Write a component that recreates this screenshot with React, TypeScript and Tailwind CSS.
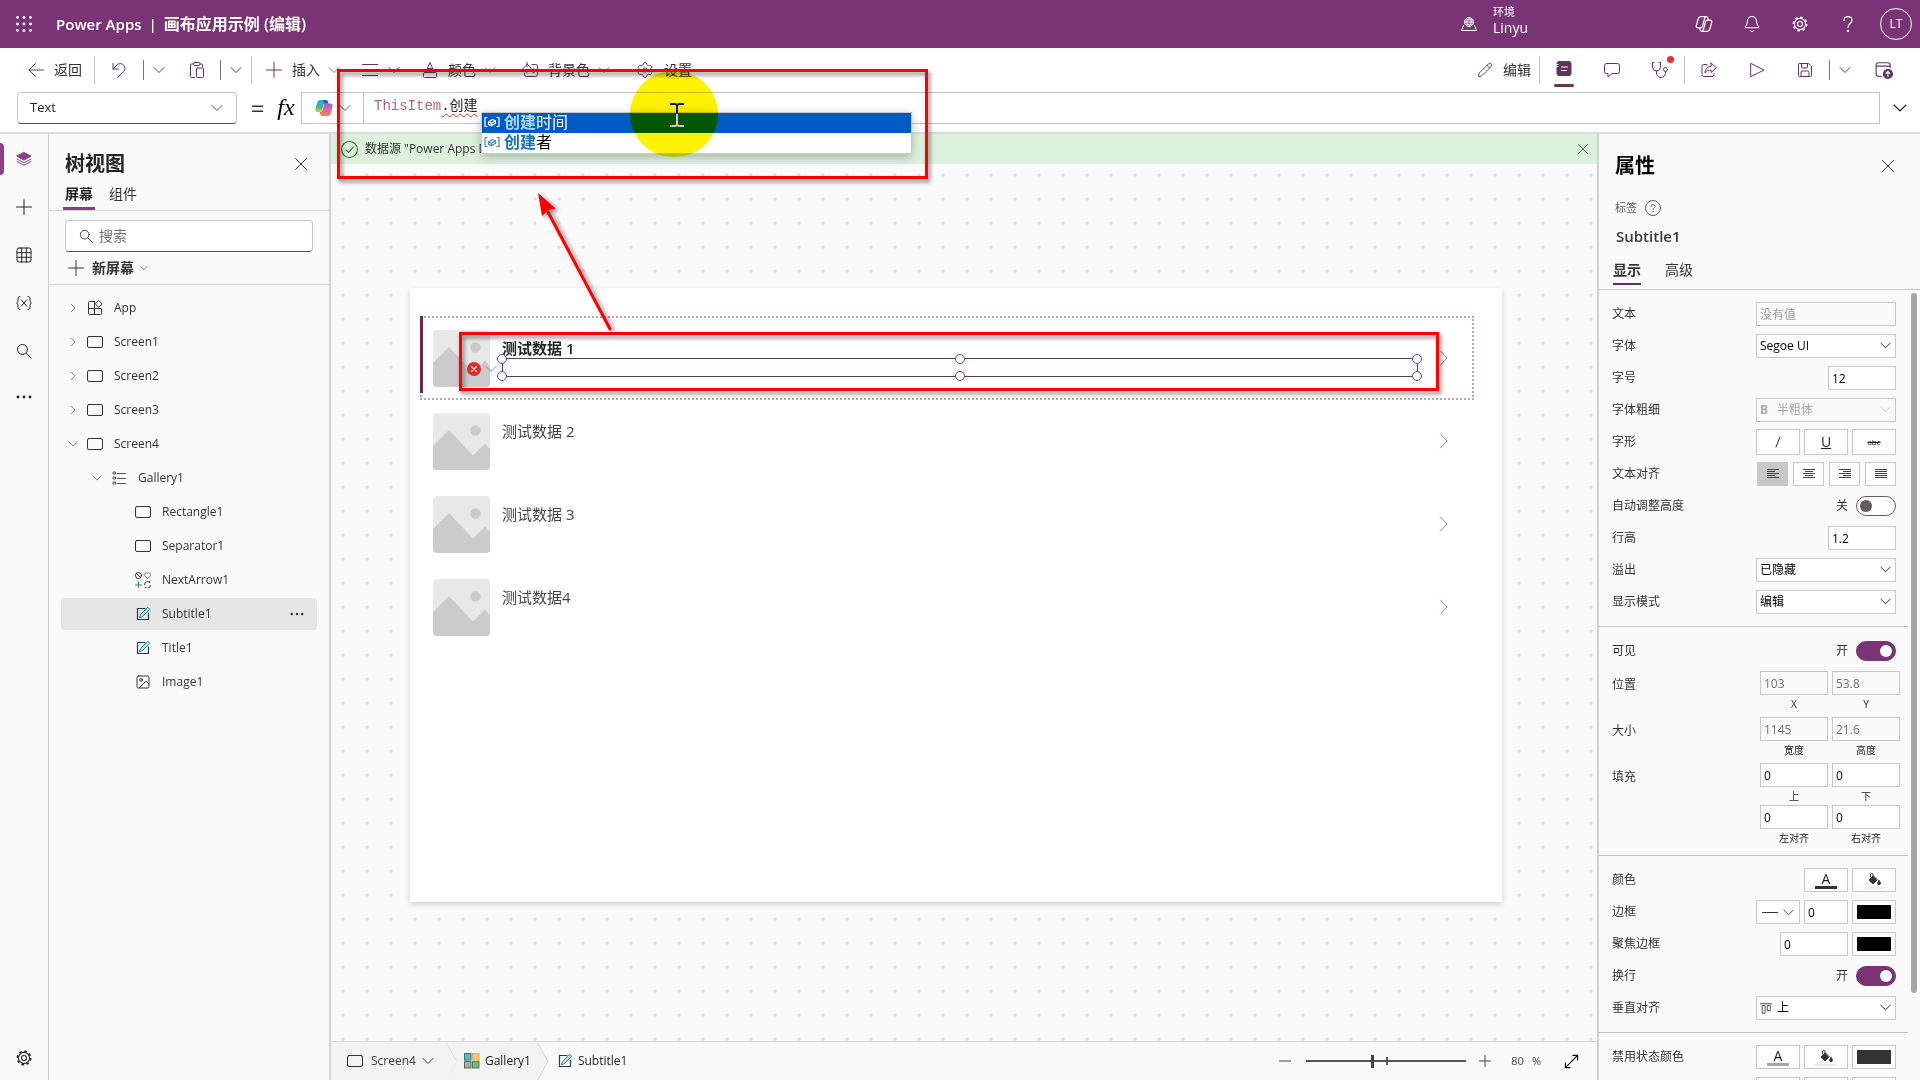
import type { ReactNode } from 'react';
import { Bell, Image as ImageIcon, Pencil, Settings } from 'lucide-react';

/* ── Icons ── */

type IconProps = { className?: string; children?: ReactNode; box?: number; stroke?: number };

function Svg({ className = 'w-4 h-4', children, box = 16, stroke = 1 }: IconProps) {
  return (
    <svg
      viewBox={`0 0 ${box} ${box}`}
      className={`${className} flex-shrink-0`}
      fill="none"
      stroke="currentColor"
      strokeWidth={stroke}
      strokeLinecap="round"
      strokeLinejoin="round"
      aria-hidden="true"
    >
      {children}
    </svg>
  );
}

const ChevronDown = ({ className = 'w-3 h-3' }: IconProps) => (
  <Svg className={className} box={12}><path d="M1 3.5l5 5 5-5" /></Svg>
);
const ChevronRight = ({ className = 'w-3 h-3' }: IconProps) => (
  <Svg className={className} box={12}><path d="M4 1.5L8.5 6 4 10.5" /></Svg>
);
const Plus = ({ className }: IconProps) => <Svg className={className}><path d="M8 .5v15M.5 8h15" /></Svg>;
const Close = ({ className = 'w-3 h-3' }: IconProps) => (
  <Svg className={className} box={12}><path d="M.5.5l11 11M11.5.5l-11 11" /></Svg>
);
const SearchIcon = ({ className }: IconProps) => (
  <Svg className={className}><circle cx="6.5" cy="6.5" r="5" /><path d="M10.3 10.3l5 5" /></Svg>
);
const Ellipsis = ({ className }: IconProps) => (
  <Svg className={className}>
    <g fill="currentColor" stroke="none">
      <circle cx="2" cy="8" r="1.4" /><circle cx="8" cy="8" r="1.4" /><circle cx="14" cy="8" r="1.4" />
    </g>
  </Svg>
);
const ScreenIcon = () => <Svg><rect x=".5" y="2.5" width="15" height="11" rx="1.5" stroke="#333" /></Svg>;
const AppIcon = () => (
  <Svg>
    <path d="M7.500 1.500H2.500a1 1 0 00-1 1v11a1 1 0 001 1h11a1 1 0 001-1V8.500h-13M7.500 1.500v13" />
    <path d="M11.800.600l3.400 3.400-3.400 3.400-3.400-3.400z" />
  </Svg>
);
const GalleryIcon = () => (
  <Svg>
    <g stroke="#555">
      <path d="M6 3.500h8.500M6 8.500h8.500M6 13.500h8.500" />
      <path d="M2.500 2h2v2h-2zM2.500 7h2v2h-2zM2.500 12h2v2h-2z" />
    </g>
  </Svg>
);
const LabelIcon = () => (
  <Svg>
    <path d="M10 2.500H2.500v11h11V7" stroke="#2b3a4a" strokeWidth="1.200" strokeLinejoin="miter" />
    <path d="M4.500 11.500l1-3 7.300-7.200 2 2-7.300 7.200z" stroke="#2a8a92" fill="#b9e3e4" />
  </Svg>
);
const IconsIcon = () => (
  <Svg>
    <circle cx="3.5" cy="3.5" r="3" stroke="#333" /><path d="M1.500 1.500l4 4" stroke="#333" />
    <path d="M3.500 10v6M.5 13h6" stroke="#2d8a4a" />
    <path d="M12.500 6.500L9.500 3.600a1.700 1.700 0 013-2 1.700 1.700 0 013 2z" stroke="#d2603c" />
    <path d="M9.500 12.500a3 3 0 015.200-1.800V9.500M15.500 13.500a3 3 0 01-5.200 1.800v1" stroke="#333" />
  </Svg>
);
const CopilotLogo = () => (
  <svg viewBox="0 0 20 20" className="w-[18px] h-[18px]" aria-hidden="true">
    <defs>
      <linearGradient id="cpA" x1="0" y1="0" x2="0" y2="1"><stop offset="0" stopColor="#23a9e8" /><stop offset=".6" stopColor="#3fb98a" /><stop offset="1" stopColor="#f0c735" /></linearGradient>
      <linearGradient id="cpB" x1="0" y1="0" x2="0" y2="1"><stop offset="0" stopColor="#a15de0" /><stop offset=".5" stopColor="#e8639b" /><stop offset="1" stopColor="#f58a4a" /></linearGradient>
    </defs>
    <path d="M6 1h6c1.500 0 2 1 2.400 2.500L15 5h-3c-2 0-2.500 1-3 3l-1 4c-.5 2-1 2.500-2.500 2.500H3C.8 14.500 0 13 .5 11L2.500 4C3.100 2 4 1 6 1z" fill="url(#cpA)" />
    <path d="M9 1h3c1.500 0 2 1 2.400 2.500L15 5h-3C10 5 9.500 4 9.300 3z" fill="#1f5fc4" />
    <path d="M14 19H8c-1.500 0-2-1-2.400-2.500L5 14.500c2 .3 3-.6 3.500-2.500l1-4c.5-2 1-3 3-3H17c2.200 0 3 1.500 2.500 3.500l-2 7.500c-.6 2-1.500 3-3.500 3z" fill="url(#cpB)" />
  </svg>
);
const FieldIcon = () => (
  <Svg className="w-4 h-[18px]" stroke={1.200}>
    <path d="M3 3.500H1v9h2M13 3.500h2v9h-2" />
    <path d="M4.500 8l4-2.500 3 1.300v2.400l-4 2.500-3-1.300zM4.500 8l3 1.300 4-2.500M7.500 9.300v2.400" />
  </Svg>
);
const BucketIcon = () => (
  <Svg className="w-4 h-4">
    <path d="M7 5L3 9l4 4 4-4z" fill="currentColor" /><path d="M7 7V3a1.500 1.500 0 00-2.500 0v3" />
    <path d="M13 9.500c1 1.500 1.500 2 1.500 2.800a1.400 1.400 0 01-2.900 0c0-.8.600-1.300 1.400-2.800z" fill="currentColor" />
  </Svg>
);
const GearIcon = () => (
  <Svg stroke={1.100}>
    <circle cx="8" cy="8" r="2.500" />
    <circle cx="8" cy="8" r="5.600" />
    <circle cx="8" cy="8" r="6.700" strokeWidth="1.600" strokeDasharray="2.630 2.630" strokeLinecap="butt" />
  </Svg>
);

/* ── Header ── */

function Header() {
  return (
    <header className="h-12 flex-shrink-0 bg-[#7a3374] text-white flex items-center">
      <button aria-label="应用启动器" className="w-12 h-12 flex items-center justify-center">
        <Svg>
          <g fill="currentColor" stroke="none">
            {[1.5, 8, 14.5].map((y) => [1.5, 8, 14.5].map((x) => <circle key={`${x}-${y}`} cx={x} cy={y} r="1.4" />))}
          </g>
        </Svg>
      </button>
      <h1 className="flex items-center pl-2 text-[15px] leading-6 font-semibold whitespace-nowrap">
        <span>Power Apps</span>
        <span className="px-[7px]">|</span>
        <span className="text-base">画布应用示例 (编辑)</span>
      </h1>

      <div className="ml-auto flex items-center gap-4 pr-[152px]">
        <Svg className="w-4 h-4">
          <circle cx="8" cy="6" r="4.500" /><path d="M3.500 6h9M8 1.500c-3 3-3 6 0 9M8 1.500c3 3 3 6 0 9M4.200 3.800h7.600M4.200 8.300h7.600" />
          <path d="M2.500 9.500L.500 14.500h15l-2-5" />
        </Svg>
        <div className="flex flex-col pb-2">
          <span className="text-[11px] leading-4">环境</span>
          <span className="text-sm leading-4">Linyu</span>
        </div>
      </div>
      <div className="flex items-center">
        <button aria-label="Copilot" className="w-12 h-12 flex items-center justify-center">
          <Svg className="w-[18px] h-[18px]" stroke={1.1}>
            <path d="M5 1.500h5c1 0 1.300.6 1.600 1.700l.4 1.300M5 1.500C3.700 1.500 3.200 2.300 2.800 3.600L1.200 9c-.4 1.500 0 2.500 1.500 2.500H5c1 0 1.400-.5 1.700-1.500L8.500 3c.3-1 .6-1.500 1.500-1.500" />
            <path d="M11 14.500H6c-1 0-1.300-.6-1.600-1.700L4 11.500M11 14.500c1.300 0 1.800-.8 2.200-2.100L14.800 7c.4-1.500 0-2.500-1.500-2.500H11c-1 0-1.400.5-1.700 1.500L7.500 13c-.3 1-.6 1.500-1.500 1.500" />
          </Svg>
        </button>
        <button aria-label="通知" className="w-12 h-12 flex items-center justify-center"><Bell className="w-[18px] h-[18px]" strokeWidth={1.4} /></button>
        <button aria-label="设置" className="w-12 h-12 flex items-center justify-center"><GearIcon /></button>
        <button aria-label="帮助" className="w-12 h-12 flex items-center justify-center">
          <Svg className="w-4 h-4" stroke={1.200}><path d="M4 4.500C4 2 5.500.600 8 .600s4 1.500 4 3.700c0 3-4 3.500-4 7" /><circle cx="8" cy="15" r=".6" fill="currentColor" /></Svg>
        </button>
        <div className="w-12 h-12 flex items-center justify-center">
          <span className="w-8 h-8 rounded-full border border-white text-xs leading-4 flex items-center justify-center">LT</span>
        </div>
      </div>
    </header>
  );
}

/* ── Command bar ── */

const Rule = ({ short = false }: { short?: boolean }) => (
  <span className={short ? 'w-px h-5 bg-[#777]' : 'w-px h-7 bg-[#c4c4c4]'} />
);

function Tool({ label, className, children }: { label: string; className: string; children: ReactNode }) {
  return (
    <button aria-label={label} className={`h-full flex items-center justify-center text-[#65325f] ${className}`}>
      {children}
    </button>
  );
}

function CommandBar() {
  return (
    <div className="h-11 flex-shrink-0 bg-white flex items-center text-sm leading-5 whitespace-nowrap">
      <button className="flex items-center gap-[10px] pl-7 pr-3">
        <Svg className="w-4 h-4 text-[#65325f]"><path d="M15.500 8H1M7.500 1.500L1 8l6.500 6.500" /></Svg>
        返回
      </button>
      <Rule />
      <Tool label="撤消" className="w-12"><Svg><path d="M2 1.500v5.500h5.500M2 7l4-4a4.600 4.600 0 016.600 6.500L6.500 15.500" /></Svg></Tool>
      <Rule short />
      <Tool label="撤消选项" className="w-[30px]"><ChevronDown /></Tool>
      <Tool label="粘贴" className="w-[46px]">
        <Svg><path d="M4.500 2H2.500a1 1 0 00-1 1v11.500a1 1 0 001 1h3M11 2h1.500a1 1 0 011 1v2" /><rect x="4.500" y=".5" width="6.500" height="3" rx="1.200" /><rect x="7.500" y="6" width="7" height="9.500" rx="1" /></Svg>
      </Tool>
      <Rule short />
      <Tool label="粘贴选项" className="w-[30px]"><ChevronDown /></Tool>
      <Rule />
      <button className="flex items-center pl-[14px]">
        <Plus className="w-4 h-4 mr-[10px] text-[#65325f]" />插入<ChevronDown className="w-3 h-3 ml-2 text-[#777]" />
      </button>
      <button aria-label="更多布局" className="flex items-center pl-[22px] text-[#65325f]">
        <Svg><path d="M0 2.500h16M0 8h16M0 13.500h16" /></Svg><ChevronDown className="w-3 h-3 ml-[10px]" />
      </button>
      <button className="flex items-center pl-[22px]">
        <Svg className="w-4 h-4 mr-[10px] text-[#65325f]"><path d="M4 9.500L8 .500l4 9M5.500 6.500h5" /><rect x="1.500" y="10.500" width="13" height="5" rx="1" /></Svg>
        颜色<ChevronDown className="w-3 h-3 ml-2 text-[#777]" />
      </button>
      <button className="flex items-center pl-[26px]">
        <Svg className="w-4 h-4 mr-[10px] text-[#65325f]"><path d="M10 2.500h3.500a2 2 0 012 2v8a2 2 0 01-2 2h-9a2 2 0 01-2-2V11" /><path d="M5 2.500L1 6.500l4 4 4-4zM5 .500v4" /><path d="M11.500 7c1 1.300 1.300 1.800 1.300 2.300a1.300 1.300 0 01-2.600 0c0-.5.300-1 1.300-2.300z" /></Svg>
        背景色<ChevronDown className="w-3 h-3 ml-2 text-[#777]" />
      </button>
      <button className="flex items-center pl-[26px]">
        <Settings className="w-[18px] h-[18px] mr-[10px] text-[#65325f]" strokeWidth={1.3} />设置
      </button>

      <div className="ml-auto h-full flex items-center pr-3">
        <button className="flex items-center gap-[10px] pr-2">
          <Pencil className="w-4 h-4 text-[#65325f]" strokeWidth={1.4} />编辑
        </button>
        <Rule />
        <Tool label="属性" className="w-12 flex-col gap-[7px] pt-2">
          <Svg className="w-4 h-4"><rect x="1" y=".5" width="14" height="14" rx="2" fill="currentColor" /><path d="M5.500 6h6M5.500 9.500h5" stroke="#fff" /><path d="M0 3.500h2M0 5.500h2" stroke="#fff" /></Svg>
          <span className="w-5 h-[3px] rounded-full bg-[#65325f]" />
        </Tool>
        <Tool label="批注" className="w-12"><Svg><path d="M2.500 1.500h11a2 2 0 012 2v6a2 2 0 01-2 2H8l-4 3.500v-3.500H2.500a2 2 0 01-2-2v-6a2 2 0 012-2z" /></Svg></Tool>
        <div className="relative h-full">
          <Tool label="应用检查器" className="w-12">
            <Svg><path d="M2 .500H.500v4.500a4 4 0 008 0V.500H7M4.500 9v2a4.500 4.500 0 009 0V9.500" /><circle cx="13.500" cy="7.500" r="2" /></Svg>
          </Tool>
          <span className="absolute right-[10px] top-2 w-[7px] h-[7px] rounded-full bg-[#e0302a]" />
        </div>
        <Rule />
        <Tool label="共享" className="w-12"><Svg><path d="M6 2.500H3a2 2 0 00-2 2v8a2 2 0 002 2h8a2 2 0 002-2v-1" /><path d="M10 1l5.500 4.800L10 10.500V8C7.500 8 5.500 8.800 4 11c.3-4 2.500-6.600 6-7z" /></Svg></Tool>
        <Tool label="预览" className="w-12"><Svg><path d="M2 1.500L15 8 2 14.500z" /></Svg></Tool>
        <Tool label="保存" className="w-12"><Svg><path d="M2.500 1.500h9L14.500 4v9.500a1 1 0 01-1 1h-11a1 1 0 01-1-1v-11a1 1 0 011-1zM4.500 1.500V5a1 1 0 001 1h4a1 1 0 001-1V1.500M4 14.500V10a1 1 0 011-1h6a1 1 0 011 1v4.500" /></Svg></Tool>
        <Rule short />
        <Tool label="保存选项" className="w-[30px]"><ChevronDown /></Tool>
        <Tool label="发布" className="w-12">
          <Svg className="w-[18px] h-[18px]"><path d="M6 13.500H3a2 2 0 01-2-2v-8a2 2 0 012-2h8.500a2 2 0 012 2V6M1 4.500h12.500" /><circle cx="11.500" cy="11.500" r="4" fill="currentColor" /><path d="M11.500 13.500v-4M9.800 11l1.700-1.700 1.700 1.700" stroke="#fff" /></Svg>
        </Tool>
      </div>
    </div>
  );
}

/* ── Formula bar ── */

function FormulaBar() {
  return (
    <div className="h-[42px] flex-shrink-0 bg-white flex items-start pl-[17px] border-b-2 border-[#dcdcdc]">
      <div className="relative">
        <select aria-label="属性" className="appearance-none w-[220px] h-8 pl-3 rounded border border-[#c4c4c4] border-b-[#555] bg-white text-[13px] text-[#242424]">
          <option>Text</option>
        </select>
        <ChevronDown className="w-3 h-3 absolute right-[14px] top-[10px] pointer-events-none text-[#555]" />
      </div>
      <span className="h-8 w-[27px] ml-[7px] text-2xl leading-8 text-center text-[#333]">=</span>
      <span className="h-8 w-[30px] font-['Liberation_Serif',serif] italic text-2xl leading-[30px] text-center text-black">fx</span>

      <div className="relative flex-1 h-8 border border-[#c4c4c4] flex">
        <button aria-label="Copilot" className="w-[62px] flex-shrink-0 border-r border-[#c4c4c4] flex items-center pl-[13px] gap-[6px] text-[#666]">
          <CopilotLogo /><ChevronDown />
        </button>
        <code className="flex h-6 pl-[10px] pt-[3px] font-['Liberation_Mono','Noto_Sans_CJK_SC',monospace] text-sm leading-5 text-[#222]">
          <span className="text-[#b0627f]">ThisItem</span>
          <span className="underline decoration-wavy decoration-[#c8322b] decoration-1 underline-offset-[3px]">.创建</span>
        </code>

        {/* autocomplete list */}
        <ul
          role="listbox"
          aria-label="建议"
          className="absolute left-[179px] top-[19px] z-20 w-[431px] h-[42px] bg-white border border-[#c8c8c8] shadow-[0_3px_10px_rgba(0,0,0,0.25)] text-base leading-4 font-['Noto_Sans_CJK_SC',sans-serif]"
        >
          <li role="option" aria-selected="true" className="flex h-5 items-start pl-[2px] gap-1 bg-[#005bc4] text-white">
            <FieldIcon /><span><b className="text-[#a9dcff]">创建</b>时间</span>
          </li>
          <li role="option" aria-selected="false" className="flex h-5 items-start pl-[2px] gap-1 text-black">
            <span className="text-[#3e86c0]"><FieldIcon /></span><span><b className="text-[#1a6fb8]">创建</b>者</span>
          </li>
        </ul>
      </div>

      <button aria-label="展开编辑栏" className="w-10 h-8 flex items-center justify-center text-black"><ChevronDown className="w-[14px] h-[14px]" /></button>
    </div>
  );
}

/* ── Left rail and tree ── */

function Rail() {
  return (
    <nav className="w-[49px] flex-shrink-0 border-r border-[#d0d0d0] flex flex-col items-center pt-px text-[#242424]">
      <button aria-label="树视图" className="relative w-12 h-12 flex items-center justify-center text-[#8e3f8a]">
        <span className="absolute left-0 top-2 w-1 h-8 rounded-r bg-[#8e4189]" />
        <Svg>
          <path d="M8 1.500l7 3.800-7 3.800-7-3.800z" fill="currentColor" /><path d="M1 8l7 3.800L15 8M1 10.500l7 3.800 7-3.800" />
        </Svg>
      </button>
      <button aria-label="插入" className="w-12 h-12 flex items-center justify-center"><Plus /></button>
      <button aria-label="数据" className="w-12 h-12 flex items-center justify-center">
        <Svg><rect x="1" y="1" width="14" height="14" rx="2" /><path d="M1 5.700h14M1 10.300h14M5.700 1v14M10.300 1v14" /></Svg>
      </button>
      <button aria-label="变量" className="w-12 h-12 flex items-center justify-center">
        <Svg><path d="M4 1.500c-1.500 0-2 .5-2 2v2.800L.700 8 2 9.700v2.800c0 1.500.500 2 2 2M12 1.500c1.500 0 2 .5 2 2v2.800L15.300 8 14 9.700v2.800c0 1.500-.5 2-2 2M5.500 5l5 6M10.500 5l-5 6" /></Svg>
      </button>
      <button aria-label="搜索" className="w-12 h-12 flex items-center justify-center"><SearchIcon /></button>
      <button aria-label="更多" className="w-12 h-11 flex items-center justify-center"><Ellipsis /></button>
      <button aria-label="设置" className="mt-auto w-12 h-11 flex items-center justify-center"><GearIcon /></button>
    </nav>
  );
}

type Node = { name: string; level: 0 | 1 | 2; icon: ReactNode; open?: boolean; selected?: boolean };

const TREE: Node[] = [
  { name: 'App', level: 0, icon: <AppIcon />, open: false },
  { name: 'Screen1', level: 0, icon: <ScreenIcon />, open: false },
  { name: 'Screen2', level: 0, icon: <ScreenIcon />, open: false },
  { name: 'Screen3', level: 0, icon: <ScreenIcon />, open: false },
  { name: 'Screen4', level: 0, icon: <ScreenIcon />, open: true },
  { name: 'Gallery1', level: 1, icon: <GalleryIcon />, open: true },
  { name: 'Rectangle1', level: 2, icon: <ScreenIcon /> },
  { name: 'Separator1', level: 2, icon: <ScreenIcon /> },
  { name: 'NextArrow1', level: 2, icon: <IconsIcon /> },
  { name: 'Subtitle1', level: 2, icon: <LabelIcon />, selected: true },
  { name: 'Title1', level: 2, icon: <LabelIcon /> },
  { name: 'Image1', level: 2, icon: <ImageIcon className="w-4 h-4" strokeWidth={1.5} /> },
];

const INDENT = ['pl-[7px]', 'pl-[31px]', 'pl-[55px]'];

function TreePanel() {
  return (
    <aside className="w-[282px] flex-shrink-0 border-r-2 border-[#d4d4d4] text-[#333]">
      <div className="flex items-center pl-4 pr-[22px] pt-[14px]">
        <h2 className="text-xl leading-8 font-bold text-[#242424]">树视图</h2>
        <button aria-label="关闭" className="ml-auto"><Close /></button>
      </div>
      <div className="flex gap-3 pl-[14px] border-b border-[#d8d8d8] text-sm leading-5">
        <button className="px-[2px] pt-1 pb-[3px] font-bold text-[#242424] border-b-[3px] border-[#873b82]">屏幕</button>
        <button className="px-[2px] pt-1 pb-[3px] border-b-[3px] border-transparent">组件</button>
      </div>
      <div className="px-4 pt-[9px]">
        <label className="h-8 flex items-center gap-[6px] pl-[13px] rounded border border-[#c8c8d0] border-b-[#555] bg-white">
          <SearchIcon className="w-[14px] h-[14px]" />
          <input type="search" aria-label="搜索" placeholder="搜索" className="min-w-0 flex-1 bg-transparent text-sm leading-5 outline-none placeholder:text-[#707070]" />
        </label>
      </div>
      <button className="w-full h-[33px] flex items-center pl-[19px] border-b border-[#d8d8d8] text-sm leading-5 font-semibold">
        <Plus /><span className="ml-2">新屏幕</span><ChevronDown className="w-2 h-2 ml-[6px]" />
      </button>
      <ul role="tree" aria-label="控件" className="flex flex-col gap-[2px] pl-3 pr-3 pt-[7px] text-xs leading-4">
        {TREE.map((n) => (
          <li
            key={n.name}
            role="treeitem"
            aria-selected={!!n.selected}
            aria-expanded={n.open}
            className={`h-8 flex items-center rounded ${INDENT[n.level]} ${n.selected ? 'bg-[#e6e6e6]' : ''}`}
          >
            <span className="w-[19px] text-[#666]">
              {n.open === true && <ChevronDown className="w-[10px] h-[10px]" />}
              {n.open === false && <ChevronRight className="w-[10px] h-[10px]" />}
            </span>
            {n.icon}
            <span className="ml-[11px]">{n.name}</span>
            {n.selected && <button aria-label="更多选项" className="ml-auto mr-[13px]"><Ellipsis className="w-[14px] h-[14px]" /></button>}
          </li>
        ))}
      </ul>
    </aside>
  );
}

/* ── Canvas ── */

const Thumb = () => (
  <svg viewBox="0 0 57 57" className="w-[57px] h-[57px] rounded" aria-hidden="true">
    <rect width="57" height="57" fill="#e8e8e8" />
    <circle cx="42.500" cy="17.500" r="5.200" fill="#cbcbcb" />
    <path d="M0 33L16 17l24 25.500 12-12 5 6V57H0z" fill="#cbcbcb" />
  </svg>
);

const Handle = ({ className }: { className: string }) => (
  <span className={`absolute w-[10px] h-[10px] rounded-full border border-[#6b4566] bg-white ${className}`} />
);

function Selection() {
  return (
    <>
      {/* template outline */}
      <div className="absolute inset-x-0 top-0 h-[84px] border-2 border-dotted border-[#b9a5b6]" />
      <div className="absolute left-0 top-0 w-[3px] h-[77px] bg-[#6d2a3a]" />
      {/* selected control */}
      <div className="absolute left-[82px] right-[56px] top-[42px] h-[19px] border border-[#5b3b57]">
        <Handle className="-left-[6px] -top-[5px]" />
        <Handle className="-left-[6px] -bottom-[5px]" />
        <Handle className="left-1/2 -ml-[5px] -top-[5px]" />
        <Handle className="left-1/2 -ml-[5px] -bottom-[5px]" />
        <Handle className="-right-[5px] -top-[5px]" />
        <Handle className="-right-[5px] -bottom-[5px]" />
      </div>
      <button aria-label="错误" className="absolute left-[47px] top-[46px] flex items-center gap-1">
        <Svg className="w-[14px] h-[14px]"><circle cx="8" cy="8" r="8" fill="#dd2c2c" stroke="none" /><path d="M5.200 5.200l5.600 5.600M10.800 5.200l-5.600 5.600" stroke="#fff" strokeWidth="1.300" /></Svg>
        <ChevronDown className="w-3 h-3 text-[#888]" />
      </button>
      <div className="absolute left-[39px] right-[35px] top-[16px] h-[59px] border-[3px] border-[#f00] drop-shadow-[2px_3px_2px_rgba(0,0,0,0.5)]" />
    </>
  );
}

const ITEMS = ['测试数据 1', '测试数据 2', '测试数据 3', '测试数据4'];

function Canvas() {
  return (
    <div className="flex-1 min-h-0 overflow-hidden bg-[radial-gradient(circle_at_center,#dcdcdc_1px,transparent_2px)] bg-[length:24px_24px] bg-[position:0px_5px] flex flex-col">
      <div role="status" className="h-[30px] flex-shrink-0 bg-[#ddf2dc] flex items-center pl-[10px] pr-[9px] text-xs leading-4 text-[#333] whitespace-nowrap">
        <Svg className="w-[17px] h-[17px] text-[#3c6b3c]"><circle cx="8" cy="8" r="7.500" /><path d="M4.500 8.300L7 10.800l4.700-5" /></Svg>
        <span className="ml-[7px]">数据源 "Power Apps D</span>
        <button aria-label="关闭" className="ml-auto text-[#555]"><Close className="w-[10px] h-[10px]" /></button>
      </div>
      <div className="pl-[67px] pr-[83px] pt-28">
        <div className="p-3 bg-[#fafafa]">
          <div className="aspect-video bg-white shadow-[0_2px_6px_rgba(0,0,0,0.18)] pl-[10px] pr-[28px] pt-[28px]">
            <ul>
              {ITEMS.map((item, i) => (
                <li key={item} className="relative h-[83px] flex items-start pl-[13px] pr-6">
                  <div className="pt-[14px]"><Thumb /></div>
                  <span className={`ml-3 pt-[22px] text-[15px] leading-5 ${i === 0 ? 'font-semibold text-[#242424]' : 'text-[#444]'}`}>{item}</span>
                  <span className="ml-auto pt-[34px] text-[#8a8a8a]">
                    <Svg className="w-4 h-4"><path d="M6.500 1L13 8l-6.500 7" /></Svg>
                  </span>
                  {i === 0 && <Selection />}
                </li>
              ))}
            </ul>
          </div>
        </div>
      </div>
    </div>
  );
}

const Crumb = () => (
  <svg viewBox="0 0 12 39" className="w-3 h-[39px] flex-shrink-0" aria-hidden="true">
    <path d="M0 0l11 19.500L0 39z" fill="#f3f3f3" /><path d="M0 0l11 19.500L0 39" fill="none" stroke="#d8d8d8" />
  </svg>
);

function StatusBar() {
  return (
    <footer className="h-[39px] flex-shrink-0 border-t border-[#d8d8d8] bg-[#fafafa] flex items-center text-xs leading-4 text-[#222]">
      <button className="h-full flex items-center pl-4 pr-3 bg-[#f3f3f3] text-[#444]">
        <ScreenIcon /><span className="ml-2">Screen4</span><ChevronDown className="w-3 h-3 ml-[6px]" />
      </button>
      <Crumb />
      <button className="h-full flex items-center pl-[18px] pr-[6px] -ml-3 bg-[#f3f3f3] [clip-path:polygon(0_0,100%_0,100%_100%,0_100%,11px_50%)]">
        <svg viewBox="0 0 16 16" className="w-4 h-4" aria-hidden="true">
          <rect x=".5" y=".5" width="6.500" height="6.500" fill="#58b8c9" stroke="#237a8c" /><rect x="8.500" y=".5" width="6.500" height="6.500" fill="#f7c877" stroke="#e5ac4b" />
          <rect x=".5" y="8.500" width="6.500" height="6.500" fill="#aaa" stroke="#666" /><rect x="8.500" y="8.500" width="6.500" height="6.500" fill="#7fb583" stroke="#3d8a4a" />
        </svg>
        <span className="ml-[5px]">Gallery1</span>
      </button>
      <Crumb />
      <button className="flex items-center pl-2"><LabelIcon /><span className="ml-[5px]">Subtitle1</span></button>

      <div className="ml-auto flex items-center pr-[18px] text-[#444]">
        <button aria-label="缩小"><Svg className="w-3 h-3" box={12}><path d="M0 6h12" /></Svg></button>
        <span className="relative ml-[15px] flex items-center">
          <input
            type="range"
            aria-label="缩放"
            min={10}
            max={180}
            defaultValue={80}
            className="appearance-none w-40 h-[2px] bg-[#555] [&::-webkit-slider-thumb]:appearance-none [&::-webkit-slider-thumb]:w-[3px] [&::-webkit-slider-thumb]:h-[13px] [&::-webkit-slider-thumb]:bg-[#444]"
          />
          <span className="absolute left-1/2 w-[2px] h-2 bg-[#555]" />
        </span>
        <button aria-label="放大" className="ml-[13px]"><Svg className="w-3 h-3" box={12}><path d="M6 .5v11M.5 6h11" /></Svg></button>
        <span className="ml-[20px] text-[11px]">80</span>
        <span className="ml-2 text-[11px]">%</span>
        <button aria-label="适应窗口" className="ml-[23px] text-black">
          <Svg className="w-[15px] h-[15px]"><path d="M1.500 14.500l13-13M9.500 1.500h5v5M1.500 9.500v5h5" strokeWidth="1.200" /></Svg>
        </button>
      </div>
    </footer>
  );
}

/* ── Properties panel ── */

function Row({ label, children }: { label: string; children: ReactNode }) {
  return (
    <div className="h-8 flex items-center pl-[13px] pr-3">
      <span className="text-[#333]">{label}</span>
      <div className="ml-auto flex items-center gap-1">{children}</div>
    </div>
  );
}

function Field({ label, value, width = 'w-[68px]', muted = false }: { label: string; value: string; width?: string; muted?: boolean }) {
  return (
    <input
      aria-label={label}
      defaultValue={value}
      className={`${width} h-6 pl-[3px] border border-[#c8c8c8] leading-4 ${muted ? 'bg-[#fafafa] text-[#707070]' : 'bg-white text-black'}`}
    />
  );
}

function Drop({ label, value, lead, disabled = false }: { label: string; value: string; lead?: ReactNode; disabled?: boolean }) {
  return (
    <div className={`relative ${disabled ? 'text-[#a8a8a8]' : 'text-black'}`}>
      <span className="absolute left-1 top-1 pointer-events-none font-bold">{lead}</span>
      <select
        aria-label={label}
        disabled={disabled}
        className={`appearance-none w-[140px] h-6 border border-[#c8c8c8] leading-4 ${lead ? 'pl-5' : 'pl-[3px]'} ${disabled ? 'bg-[#fafafa]' : 'bg-white'}`}
      >
        <option>{value}</option>
      </select>
      <ChevronDown className={`w-[11px] h-[11px] absolute right-[5px] top-[6px] pointer-events-none ${disabled ? 'text-[#ccc]' : 'text-[#111]'}`} />
    </div>
  );
}

function Toggle({ label, on }: { label: string; on: boolean }) {
  return (
    <label className="flex items-center gap-2 text-[#333]">
      {on ? '开' : '关'}
      <input
        type="checkbox"
        role="switch"
        aria-label={label}
        defaultChecked={on}
        className="appearance-none w-10 h-5 rounded-full border border-[#605e5c] bg-white p-[3px] before:block before:w-3 before:h-3 before:rounded-full before:bg-[#605e5c] checked:bg-[#7a3374] checked:border-[#7a3374] checked:before:bg-white checked:before:ml-5"
      />
    </label>
  );
}

const Cell = ({ label, className, children }: { label: string; className: string; children?: ReactNode }) => (
  <button aria-label={label} className={`border border-[#c8c8c8] flex flex-col items-center justify-center ${className}`}>{children}</button>
);

const Swatch = ({ color }: { color: string }) => <span className={`w-[34px] h-[14px] ${color}`} />;

const FontColor = ({ color }: { color: string }) => (
  <>
    <span className="text-sm leading-[14px] text-[#222]">A</span>
    <span className={`w-[22px] h-[3px] ${color}`} />
  </>
);

const Fill = () => (
  <>
    <BucketIcon />
    <span className="w-[22px] h-[2px] bg-[#ebebeb]" />
  </>
);

function Pair({ label, fields, muted = false }: { label: string; fields: [string, string][][]; muted?: boolean }) {
  return (
    <div className="flex pl-[13px] pr-2 pt-1">
      <span className="text-[#333] leading-4 pt-[6px]">{label}</span>
      <div className="ml-auto">
        {fields.map((line, i) => (
          <div key={i} className="flex gap-1">
            {line.map(([name, value]) => (
              <label key={name} className="flex flex-col items-center text-[10px] leading-[18px] text-[#222]">
                <span className="flex text-xs"><Field label={name} value={value} muted={muted} /></span>
                {name}
              </label>
            ))}
          </div>
        ))}
      </div>
    </div>
  );
}

const ALIGN = [
  { label: '左对齐', d: 'M2 3.500h12M2 5.500h8M2 7.500h12M2 9.500h8M2 11.500h12' },
  { label: '居中', d: 'M2 3.500h12M4 5.500h8M2 7.500h12M4 9.500h8M2 11.500h12' },
  { label: '右对齐', d: 'M2 3.500h12M6 5.500h8M2 7.500h12M6 9.500h8M2 11.500h12' },
  { label: '两端对齐', d: 'M2 3.500h12M2 5.500h12M2 7.500h12M2 9.500h12M2 11.500h12' },
];

function Properties() {
  return (
    <aside className="w-[323px] flex-shrink-0 border-l-2 border-[#d0d0d0] bg-[#fafafa] flex flex-col text-xs leading-4">
      <div className="border-b border-[#c8c8c8]">
        <div className="flex items-center pl-4 pr-[26px] pt-4">
          <h2 className="text-xl leading-8 font-bold text-black">属性</h2>
          <button aria-label="关闭" className="ml-auto"><Close /></button>
        </div>
        <div className="flex items-center gap-2 pl-4 pt-[18px] text-[11px] text-[#605e5c]">
          标签
          <Svg><circle cx="8" cy="8" r="7.500" /><path d="M6 6.500a2 2 0 114 0c0 1.500-2 1.500-2 3M8 11.500v.2" /></Svg>
        </div>
        <p className="pl-[17px] pt-2 text-[15px] leading-6 font-semibold text-[#3b3a39]">Subtitle1</p>
        <div className="flex gap-6 pl-[14px] pt-3 text-sm leading-5 text-[#333]">
          <button className="pb-[3px] border-b-2 border-[#5f2f5a] font-bold">显示</button>
          <button className="pb-[3px] border-b-2 border-transparent">高级</button>
        </div>
        <div className="h-1" />
      </div>

      <div className="flex-1 min-h-0 overflow-hidden flex">
        <div className="flex-1">
          <section className="pt-2 pb-2 border-b border-[#c8c8c8]">
            <Row label="文本"><input aria-label="文本" placeholder="没有值" className="w-[140px] h-6 pl-[3px] border border-[#c8c8c8] placeholder:text-[#a0a0a0]" /></Row>
            <Row label="字体"><Drop label="字体" value="Segoe UI" /></Row>
            <Row label="字号"><Field label="字号" value="12" /></Row>
            <Row label="字体粗细"><Drop label="字体粗细" value="半粗体" lead="B" disabled /></Row>
            <Row label="字形">
              <Cell label="斜体" className="w-11 h-[26px] bg-white"><Svg className="w-4 h-4"><path d="M6 13L10 3" stroke="#222" /></Svg></Cell>
              <Cell label="下划线" className="w-11 h-[26px] bg-white"><span className="text-sm leading-4 underline text-[#222]">U</span></Cell>
              <Cell label="删除线" className="w-11 h-[26px] bg-white"><span className="text-[8px] leading-3 line-through text-[#222]">abc</span></Cell>
            </Row>
            <Row label="文本对齐">
              <div className="flex gap-[5px]">
                {ALIGN.map((a, i) => (
                  <Cell key={a.label} label={a.label} className={`w-[31px] h-6 ${i === 0 ? 'bg-[#c8c8c8] border-[#a0a0a0]' : 'bg-white'}`}>
                    <Svg><path d={a.d} stroke="#444" strokeLinecap="butt" /></Svg>
                  </Cell>
                ))}
              </div>
            </Row>
            <Row label="自动调整高度"><Toggle label="自动调整高度" on={false} /></Row>
            <Row label="行高"><Field label="行高" value="1.2" /></Row>
            <Row label="溢出"><Drop label="溢出" value="已隐藏" /></Row>
            <Row label="显示模式"><Drop label="显示模式" value="编辑" /></Row>
          </section>

          <section className="pt-2 pb-2 border-b border-[#c8c8c8]">
            <Row label="可见"><Toggle label="可见" on /></Row>
            <Pair label="位置" muted fields={[[['X', '103'], ['Y', '53.8']]]} />
            <Pair label="大小" muted fields={[[['宽度', '1145'], ['高度', '21.6']]]} />
            <Pair label="填充" fields={[[['上', '0'], ['下', '0']], [['左对齐', '0'], ['右对齐', '0']]]} />
          </section>

          <section className="pt-2 pb-2 border-b border-[#c8c8c8]">
            <Row label="颜色">
              <Cell label="字体颜色" className="w-11 h-6 bg-white"><FontColor color="bg-[#333]" /></Cell>
              <Cell label="填充颜色" className="w-11 h-6 bg-white"><Fill /></Cell>
            </Row>
            <Row label="边框">
              <button aria-label="边框样式" className="w-11 h-6 border border-[#c8c8c8] bg-white flex items-center justify-between px-[5px] text-[#333]">
                <span className="w-4 h-px bg-[#333]" /><ChevronDown className="w-[11px] h-[11px]" />
              </button>
              <Field label="边框" value="0" width="w-11" />
              <Cell label="边框颜色" className="w-11 h-6 bg-white"><Swatch color="bg-black" /></Cell>
            </Row>
            <Row label="聚焦边框">
              <Field label="聚焦边框" value="0" />
              <Cell label="聚焦边框颜色" className="w-11 h-6 bg-white"><Swatch color="bg-black" /></Cell>
            </Row>
            <Row label="换行"><Toggle label="换行" on /></Row>
            <Row label="垂直对齐">
              <Drop
                label="垂直对齐"
                value="上"
                lead={<Svg className="w-3 h-4" box={14}><path d="M0 2h14M3 4h3v9H3zM9 4h3v6H9z" stroke="#333" /></Svg>}
              />
            </Row>
          </section>

          <section className="pt-2">
            <Row label="禁用状态颜色">
              <Cell label="禁用字体颜色" className="w-11 h-6 bg-white"><FontColor color="bg-[#a6a6a6]" /></Cell>
              <Cell label="禁用填充" className="w-11 h-6 bg-white"><Fill /></Cell>
              <Cell label="禁用边框" className="w-11 h-6 bg-white"><Swatch color="bg-[#333]" /></Cell>
            </Row>
            <Row label="">
              <Cell label="悬停字体颜色" className="w-11 h-6 bg-white" />
              <Cell label="悬停填充" className="w-11 h-6 bg-white" />
              <Cell label="悬停边框" className="w-11 h-6 bg-white" />
            </Row>
          </section>
        </div>
        <div className="w-3 pt-[3px] flex justify-center">
          <span className="w-[6px] h-[89%] rounded-full bg-[#a6a6a6]" />
        </div>
      </div>
    </aside>
  );
}

/* ── Callouts drawn over the editor ── */

function Callouts() {
  return (
    <>
      <div className="absolute left-[630px] top-[71px] w-[88px] h-[86px] rounded-full bg-[#fff200] mix-blend-multiply z-30 pointer-events-none" />
      <svg viewBox="0 0 16 26" className="absolute left-[669px] top-[102px] w-4 h-[26px] z-40 pointer-events-none" fill="none" aria-hidden="true">
        <path d="M1 2h5l2 1 2-1h5M8 3v9" stroke="#1a1a6e" strokeWidth="2" />
        <path d="M8 12v11M1 24h5l2-1 2 1h5" stroke="#e6bcc0" strokeWidth="2" />
      </svg>
      <div className="absolute left-[337px] top-[69px] w-[591px] h-[110px] border-[3px] border-[#f00] drop-shadow-[2px_3px_2px_rgba(0,0,0,0.5)] z-40 pointer-events-none" />
      <svg viewBox="0 0 90 145" className="absolute left-[530px] top-[190px] w-[90px] h-[145px] z-40 pointer-events-none drop-shadow-[3px_2px_2px_rgba(0,0,0,0.45)]" aria-hidden="true">
        <path d="M80 139L18 22" stroke="#f00" strokeWidth="3" strokeLinecap="round" />
        <path d="M8 3l17.500 15.500-7 1.500-6.500 6z" fill="#f00" />
      </svg>
    </>
  );
}

export default function App() {
  return (
    <div className="relative h-screen flex flex-col overflow-hidden bg-[#fafafa] text-[#333] font-['Open_Sans','Noto_Sans_CJK_SC',sans-serif]">
      <Header />
      <CommandBar />
      <FormulaBar />
      <div className="flex-1 min-h-0 flex">
        <Rail />
        <TreePanel />
        <main className="flex-1 min-w-0 flex flex-col">
          <Canvas />
          <StatusBar />
        </main>
        <Properties />
      </div>
      <Callouts />
    </div>
  );
}
